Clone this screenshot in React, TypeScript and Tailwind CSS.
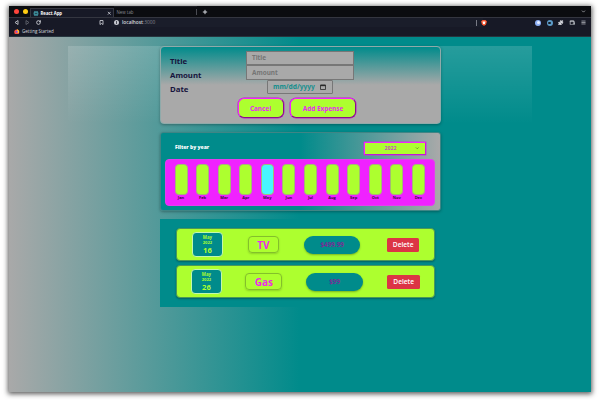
import React from 'react';
import { ChevronDown, Menu, Plus, Puzzle, RotateCw, Wallet, X } from 'lucide-react';

const months = ['Jan', 'Feb', 'Mar', 'Apr', 'May', 'Jun', 'Jul', 'Aug', 'Sep', 'Oct', 'Nov', 'Dec'];

function BrowserChrome() {
  return (
    <header className="h-[31px] shrink-0 bg-[#171926] text-[#d4d6dc]">
      <div className="flex h-[11px] items-center bg-[#0b0c10]">
        <div className="ml-[5px] h-[5px] w-[5px] rounded-full bg-[#ff453c]" />
        <div className="ml-[3.5px] h-[5px] w-[5px] rounded-full bg-[#ffcc12]" />
        <div className="ml-[2px] flex h-[9px] w-[84px] items-center self-end border-x border-t border-[#353740] bg-[#171926]">
          <svg viewBox="0 0 12 10" className="ml-[2px] h-[5px] w-[6px]" fill="none" stroke="#45a3b0" strokeWidth="1.2">
            <ellipse cx="6" cy="5" rx="5.5" ry="2.3" />
            <ellipse cx="6" cy="5" rx="5.5" ry="2.3" transform="rotate(60 6 5)" />
            <ellipse cx="6" cy="5" rx="5.5" ry="2.3" transform="rotate(120 6 5)" />
          </svg>
          <span className="ml-[2px] text-[4.3px] leading-none font-bold text-white">React App</span>
          <X className="mr-[1.5px] ml-auto h-[4.5px] w-[4.5px]" strokeWidth={4} />
        </div>
        <div className="flex h-full w-[83px] items-center border-t border-[#1b1c22] pl-[3px]">
          <span className="text-[4.4px] leading-none text-[#888a92]">New tab</span>
          <div className="ml-auto h-[6px] w-px bg-[#4a4b52]" />
        </div>
        <Plus className="ml-[5px] h-[6px] w-[6px]" strokeWidth={4} />
        <ChevronDown className="mr-[5px] ml-auto h-[5px] w-[5px]" strokeWidth={3} />
      </div>
      <div className="flex h-[10px] items-center border-t border-[#343640] pl-[5px]">
        <svg viewBox="0 0 10 10" className="h-[5px] w-[5px]" fill="none" stroke="#d4d6dc" strokeWidth="1.6">
          <path d="M8 1 L2 5 L8 9 Z" />
        </svg>
        <svg viewBox="0 0 10 10" className="ml-[6px] h-[5px] w-[5px]" fill="none" stroke="#686a74" strokeWidth="1.6">
          <path d="M2 1 L8 5 L2 9 Z" />
        </svg>
        <RotateCw className="ml-[6px] h-[5px] w-[5px]" strokeWidth={4} />
        <svg viewBox="0 0 10 10" className="ml-[58px] h-[5px] w-[5px]" fill="none" stroke="#c4c6cd" strokeWidth="1.8">
          <path d="M2 1 H8 V9 L5 7 L2 9 Z" />
        </svg>
        <div className="ml-[7px] flex h-[9px] w-[372px] items-center bg-[#1a1d2a] pl-[3px]">
          <span className="flex h-[5px] w-[5px] items-center justify-center rounded-full bg-[#c6c8cf]">
            <span className="h-[3px] w-px bg-[#4e505b]" />
          </span>
          <span className="ml-[3px] text-[4.8px] leading-none font-semibold text-[#d4d6dc]">
            localhost<span className="font-normal text-[#858791]">:3000</span>
          </span>
          <span className="ml-auto h-[6px] w-px bg-[#777984]" />
          <svg viewBox="0 0 12 12" className="mr-[-4px] ml-[4px] h-[6px] w-[6px]">
            <path d="M3 0 H9 L12 3 L10 9 L6 12 L2 9 L0 3Z" fill="#f3512b" />
            <path d="M3 3 H9 L8 7 L6 9 L4 7Z" fill="#fff" />
          </svg>
        </div>
        <div className="mr-[5px] ml-auto flex items-center gap-[5.5px]">
          <span className="flex h-[6px] w-[6px] items-center justify-center rounded-full bg-[#8eb0f5]">
            <span className="h-[3px] w-[3px] rounded-full bg-[#e4edff]" />
          </span>
          <span className="flex h-[6px] w-[6px] items-center justify-center rounded-full bg-[#5d9bc8]">
            <span className="h-[2px] w-[3px] rounded-full bg-[#161c29]" />
          </span>
          <Puzzle className="h-[5.5px] w-[5.5px] fill-[#d4d6dc]" strokeWidth={2} />
          <Wallet className="h-[5.5px] w-[6.5px]" strokeWidth={3} />
          <Menu className="h-[5px] w-[5px]" strokeWidth={3} />
        </div>
      </div>
      <div className="flex h-[10px] items-center border-b border-[#26353e] pl-[5px]">
        <svg viewBox="0 0 12 12" className="h-[5.5px] w-[5.5px]">
          <circle cx="6" cy="6.5" r="5.5" fill="#ff513f" />
          <path d="M7 0 Q13 4 10.5 9 L6 7Z" fill="#ffc928" />
          <circle cx="6" cy="6" r="2.3" fill="#8550e5" />
        </svg>
        <span className="ml-[2.5px] text-[4.5px] leading-none">Getting Started</span>
      </div>
    </header>
  );
}

const labelClass = 'pt-[4.5px] text-[7.8px] leading-[11px] text-[#17143d]';
const inputClass = 'flex h-[14.3px] items-center border border-[#777] bg-[#a9a9a9] pl-[5px]';
const buttonClass =
  'h-[20px] rounded-[6px] border border-t-[#f324ff] border-r-[#87118b] border-b-[#87118b] border-l-[#f324ff] bg-[#adff2f] shadow-[0_0_0_0.5px_#c41bd0]';

function ExpenseForm() {
  return (
    <section className="h-[78px] bg-linear-to-b/srgb from-white/15 to-white/0 pl-[91.5px]">
      <form className="h-[78px] w-[281.5px] rounded-[4px] border border-[#8faaaa] bg-linear-to-b/srgb from-[#008b8b] to-[#a9a9a9] to-50% pr-[9px] pl-[9.5px] pt-[4px] font-['Noto_Sans','DejaVu_Sans',sans-serif] font-bold shadow-[0_1px_3px_rgba(0,0,0,0.3)]">
        <div className="flex h-[14.3px]">
          <label className={`w-[76px] ${labelClass}`}>Title</label>
          <div className={`w-[108px] text-[6.4px] text-[#757575] ${inputClass}`}>Title</div>
        </div>
        <div className="flex h-[14.3px]">
          <label className={`w-[76px] ${labelClass}`}>Amount</label>
          <div className={`w-[108px] text-[6.4px] text-[#757575] ${inputClass}`}>Amount</div>
        </div>
        <div className="flex h-[14.3px]">
          <label className={`w-[97px] ${labelClass}`}>Date</label>
          <div className={`w-[66px] rounded-[1px] text-[6.6px] text-[#168f8e] ${inputClass}`}>
            mm/dd/yyyy
            <svg viewBox="0 0 12 12" className="mr-[6px] ml-auto h-[6px] w-[6px]" fill="none" stroke="#292929" strokeWidth="1.6">
              <path d="M1 2 H11 V11 H1 Z" />
              <path d="M1 3 H11" strokeWidth="2.6" />
            </svg>
          </div>
        </div>
        <div className="mt-[4.5px] ml-[67.5px] flex gap-[6.5px] text-[6.4px] text-[#e62af2]">
          <button type="button" className={`w-[46px] ${buttonClass}`}>Cancel</button>
          <button type="button" className={`w-[66px] ${buttonClass}`}>Add Expense</button>
        </div>
      </form>
    </section>
  );
}

function ExpenseChart() {
  return (
    <section className="mt-[8px] ml-[91.5px] h-[79px] w-[281.5px] rounded-[3px] border border-[#3f8585] bg-linear-to-r/srgb from-[#008b8b] from-50% to-[#a9a9a9] pt-[9px] pr-[5.5px] pl-[4.5px] shadow-[0_1px_3px_rgba(0,0,0,0.3)]">
      <div className="flex h-[17.3px] items-start justify-between pr-[9px] pl-[10px]">
        <span className="mt-[2px] text-[5px] leading-[6px] font-extrabold text-white">Filter by year</span>
        <div className="flex h-[13px] w-[62px] items-center border border-t-[#f324ff] border-r-[#d412e5] border-b-[#c018d7] border-l-[#f324ff] bg-[#adff2f] pr-[5px] pl-[20px] text-[5.3px] font-bold text-[#c255b8] shadow-[0_0_0_0.4px_#d91fe8]">
          2022
          <ChevronDown className="ml-auto h-[4.5px] w-[4.5px] text-[#426c15]" strokeWidth={3} />
        </div>
      </div>
      <div className="flex h-[46.5px] justify-between rounded-[4px] border border-[#e43eee] bg-[#f022ff] px-[8.5px] pt-[3.7px]">
        {months.map((month) => (
          <div key={month} className="flex w-[13px] flex-col items-center">
            <div className={`h-[31.5px] w-[13px] shrink-0 rounded-[4px] border border-[#a5b874] ${month === 'May' ? 'bg-[#48f7ff]' : 'bg-[#adff2f]'}`} />
            <span className="mt-[0.8px] text-[4px] leading-[4px] font-bold text-[#35103c]">{month}</span>
          </div>
        ))}
      </div>
    </section>
  );
}

type ExpenseProps = { day: string; title: string; amount: string; second?: boolean };

function ExpenseItem({ day, title, amount, second = false }: ExpenseProps) {
  return (
    <li className={`flex h-[33px] items-center rounded-[4px] border border-[#4b9858] bg-[#adff2f] shadow-[0_1px_2px_rgba(0,0,0,0.3)] ${second ? 'pl-[14px]' : 'pl-[15px]'}`}>
      <time className="flex h-[25px] w-[31px] flex-col items-center rounded-[4px] border border-[#c4f8ad] bg-[#008b8b] pt-[1.5px] font-bold text-[#adff2f]">
        <span className="text-[4.3px] leading-[5px]">May</span>
        <span className="text-[4.1px] leading-[5px]">2022</span>
        <span className="text-[7.6px] leading-[10px]">{day}</span>
      </time>
      <h2 className={`flex h-[17px] items-center justify-center rounded-[4px] border border-[#83c02b] text-[10px] leading-none font-bold text-[#ed2ae8] shadow-[0_1px_2px_rgba(0,0,0,0.18)] ${second ? 'ml-[23.5px] w-[37px]' : 'ml-[25px] w-[31px]'}`}>{title}</h2>
      <div className={`flex h-[18.5px] w-[56.5px] items-center justify-center rounded-full bg-[#008b8b] text-[6.3px] font-bold text-[#7a2c96] shadow-[0_1px_2px_rgba(0,0,0,0.3)] ${second ? 'ml-[24px]' : 'ml-[25px]'}`}>{amount}</div>
      <button type="button" className={`flex h-[13.5px] w-[32.5px] items-center justify-center rounded-[1.5px] bg-[#dc3545] text-[6.6px] font-semibold text-white ${second ? 'ml-[24.5px]' : 'ml-[26.5px]'}`}>Delete</button>
    </li>
  );
}

export default function App() {
  return (
    <div className="h-[400px] w-[600px] overflow-hidden bg-white px-[9px] pt-[6px] pb-[8px] font-['Open_Sans','Noto_Sans',sans-serif]">
      <div className="flex h-[386px] flex-col bg-[#008b8b] shadow-[0_1px_5px_1px_rgba(0,0,0,0.65)]">
        <BrowserChrome />
        <main className="min-h-0 flex-1 bg-linear-to-r/srgb from-[#a9a9a9] to-[#008b8b] to-50% px-[59px] pt-[9px]">
          <ExpenseForm />
          <ExpenseChart />
          <ul className="mt-[8px] ml-[91.5px] flex h-[88px] w-[281.5px] flex-col gap-[4px] bg-[#008b8b] pt-[9.4px] pr-[6px] pl-[16.4px]">
            <ExpenseItem day="16" title="TV" amount="$499.99" />
            <ExpenseItem day="26" title="Gas" amount="$99" second />
          </ul>
        </main>
      </div>
    </div>
  );
}
